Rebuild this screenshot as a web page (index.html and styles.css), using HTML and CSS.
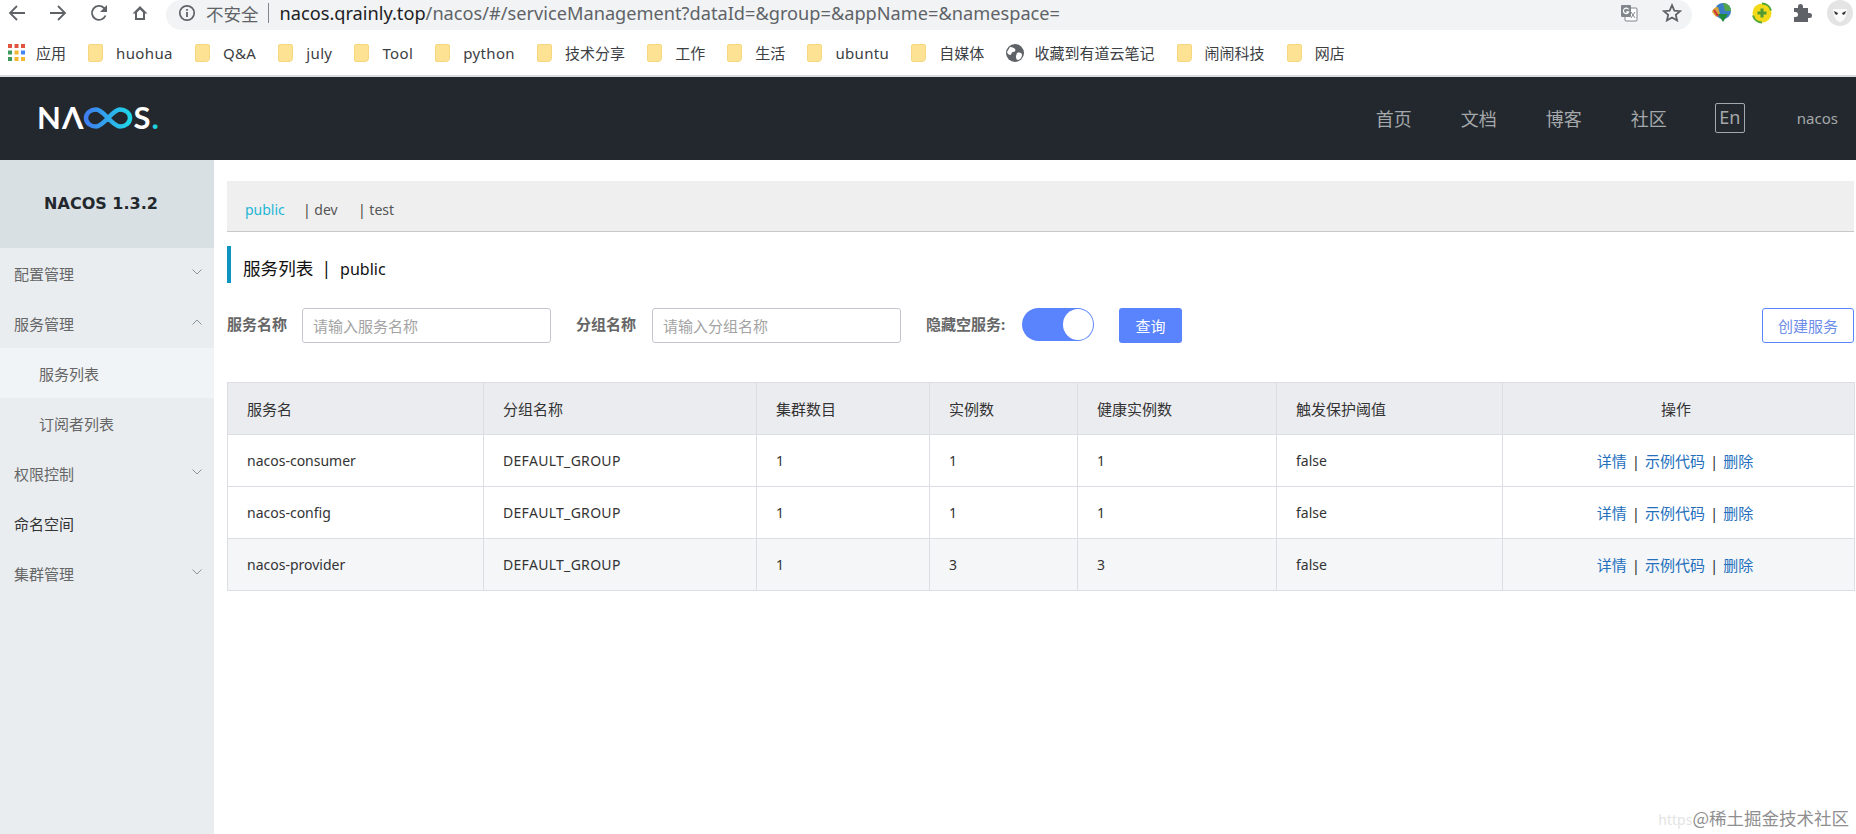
FILE: index.html
```html
<!DOCTYPE html>
<html lang="zh-CN">
<head>
<meta charset="utf-8">
<title>Nacos</title>
<link rel="stylesheet" href="styles.css">
</head>
<body>
<div class="toolbar">
  <div class="nav-icons">
    <svg class="ic" viewBox="0 0 18 18"><path d="M17 9H2M9 2 2 9l7 7" fill="none" stroke="#5f6368" stroke-width="1.8"/></svg>
    <svg class="ic" viewBox="0 0 18 18"><path d="M1 9h15M9 2l7 7-7 7" fill="none" stroke="#5f6368" stroke-width="1.8"/></svg>
    <svg class="ic" viewBox="0 0 18 18"><path d="M15.5 11.5A7 7 0 1 1 14 4l2 2" fill="none" stroke="#5f6368" stroke-width="1.8"/><path d="M17 1v7h-7z" fill="#5f6368"/></svg>
    <svg class="ic" viewBox="0 0 18 18"><path d="M9 2 1.500 9.500H4V16h10V9.500h2.500zM6 14V8.500l3-3 3 3V14z" fill="#5f6368" fill-rule="evenodd"/></svg>
  </div>
  <div class="omnibox">
    <svg class="info" viewBox="0 0 18 18"><circle cx="9" cy="9" r="7.200" fill="none" stroke="#5f6368" stroke-width="1.700"/><path d="M8.100 5h1.800v1.800H8.100zM8.100 8h1.800v5H8.100z" fill="#5f6368"/></svg>
    <span class="insecure">不安全</span>
    <span class="omni-sep"></span>
    <span class="url"><b>nacos.qrainly.top</b>/nacos/#/serviceManagement?dataId=&amp;group=&amp;appName=&amp;namespace=</span>
    <svg class="translate" viewBox="0 0 18 18"><rect x="5" y="4" width="12" height="13" rx="1" fill="#fff" stroke="#80868b"/><rect x="1" y="1" width="10" height="12" rx="1" fill="#80868b"/><path d="M8.500 5.500a2.700 2.700 0 1 0 .2 2.300H6.200" fill="none" stroke="#fff" stroke-width="1.200"/><path d="m11 8 4 6M15 8l-4 6" stroke="#80868b"/></svg>
    <svg class="star" viewBox="0 0 18 18"><path d="m9 2 2.100 4.800 5.200.5-3.900 3.400 1.200 5.100L9 13.100l-4.600 2.700 1.200-5.100-3.900-3.400 5.200-.5z" fill="none" stroke="#5f6368" stroke-width="1.600"/></svg>
  </div>
  <div class="ext-icons">
    <svg class="ext" viewBox="0 0 22 22"><circle cx="12" cy="9" r="8" fill="#3b7dc4"/><path d="M12 1a8 8 0 0 1 8 8h-6z" fill="#55a64b"/><path d="M1 10c1-4 4-5 6-5l2 7-4 3z" fill="#d9a43a"/><path d="M3 8l4 6z" stroke="#c33" stroke-width="2"/><path d="M7 12h10l-5 8z" fill="#1f8a3c"/></svg>
    <svg class="ext" viewBox="0 0 22 22"><circle cx="11" cy="11" r="9.500" fill="#f3d917"/><path d="M11 1.500a9.500 9.500 0 0 1 9 7" fill="none" stroke="#57a63a" stroke-width="2"/><path d="M11 20.500a9.500 9.500 0 0 1-9-7" fill="none" stroke="#57a63a" stroke-width="2"/><path d="M9.500 6.500h3v3h3v3h-3v3h-3v-3h-3v-3h3z" fill="#4f9a33"/></svg>
    <svg class="ext" viewBox="0 0 22 22"><path d="M3 6h4V4.500a2.500 2.500 0 0 1 5 0V6h5v5h1.500a2.500 2.500 0 0 1 0 5H17v4H3v-5h1.500a2.500 2.500 0 0 0 0-5H3z" fill="#5f6368"/></svg>
    <svg class="avatar" viewBox="0 0 26 26"><circle cx="13" cy="13" r="13" fill="#e4e4e4"/><path d="M6 9c4 0 14 0 14 0 0 8-4 13-7 13S6 17 6 9z" fill="#fafafa"/><path d="m7 11 4 2-1 2-2-1zM19 11l-4 2 1 2 2-1z" fill="#333"/></svg>
  </div>
</div>
<div class="bookmarks">
  <span class="bm"><svg class="apps" viewBox="0 0 17 17"><g fill="#e0533f"><rect width="4" height="4"/><rect x="6.500" width="4" height="4"/><rect x="13" width="4" height="4"/></g><g fill="#3c9a5f"><rect y="6.500" width="4" height="4"/></g><g fill="#f2b632"><rect x="6.500" y="6.500" width="4" height="4"/></g><g fill="#4285f4"><rect x="13" y="6.500" width="4" height="4"/></g><g fill="#3c9a5f"><rect y="13" width="4" height="4"/></g><g fill="#f2b632"><rect x="6.500" y="13" width="4" height="4"/><rect x="13" y="13" width="4" height="4"/></g></svg>应用</span>
  <span class="bm lat"><i class="folder"></i>huohua</span>
  <span class="bm lat"><i class="folder"></i>Q&amp;A</span>
  <span class="bm lat"><i class="folder"></i>july</span>
  <span class="bm lat"><i class="folder"></i>Tool</span>
  <span class="bm lat"><i class="folder"></i>python</span>
  <span class="bm"><i class="folder"></i>技术分享</span>
  <span class="bm"><i class="folder"></i>工作</span>
  <span class="bm"><i class="folder"></i>生活</span>
  <span class="bm lat"><i class="folder"></i>ubuntu</span>
  <span class="bm"><i class="folder"></i>自媒体</span>
  <span class="bm bm-globe"><svg class="globe" viewBox="0 0 18 18"><circle cx="9" cy="9" r="9" fill="#5f6368"/><path d="M4 3c3 0 4 1 5 2s0 3-2 3-1 3-3 3-3-3-3-3zM11 9c3-1 5 0 5 2s-2 5-4 5-2-3-2-4z" fill="#fff"/></svg>收藏到有道云笔记</span>
  <span class="bm"><i class="folder"></i>闹闹科技</span>
  <span class="bm"><i class="folder"></i>网店</span>
</div>
<header class="topbar">
  <div class="logo"><span>NΛ</span><svg class="inf" viewBox="0 0 50 24"><defs><linearGradient id="g" x1="0" x2="1"><stop offset="0" stop-color="#3f7df0"/><stop offset="1" stop-color="#1fd6e8"/></linearGradient></defs><path d="M13 3.500c-5.500 0-10 3.500-10 8.500s4.500 8.500 10 8.500c8 0 16-17 24-17 5.500 0 10 3.500 10 8.500s-4.500 8.500-10 8.500c-8 0-16-17-24-17z" fill="none" stroke="url(#g)" stroke-width="4.500"/></svg><span>S</span><span class="logo-dot">.</span></div>
  <nav class="topnav">
    <a>首页</a><a>文档</a><a>博客</a><a>社区</a>
    <span class="lang">En</span>
    <span class="user">nacos</span>
  </nav>
</header>
<div class="body-wrap">
  <aside class="sidebar">
    <div class="side-head">NACOS 1.3.2</div>
    <div class="side-item">配置管理<svg class="chev" viewBox="0 0 10 6"><path d="m.5.500 4.500 4.500L9.500.500" fill="none" stroke="#8a949c"/></svg></div>
    <div class="side-item">服务管理<svg class="chev" viewBox="0 0 10 6"><path d="M.5 5.500 5 1l4.500 4.500" fill="none" stroke="#8a949c"/></svg></div>
    <div class="side-item sub active">服务列表</div>
    <div class="side-item sub">订阅者列表</div>
    <div class="side-item">权限控制<svg class="chev" viewBox="0 0 10 6"><path d="m.5.500 4.500 4.500L9.500.500" fill="none" stroke="#8a949c"/></svg></div>
    <div class="side-item dark">命名空间</div>
    <div class="side-item">集群管理<svg class="chev" viewBox="0 0 10 6"><path d="m.5.500 4.500 4.500L9.500.500" fill="none" stroke="#8a949c"/></svg></div>
  </aside>
  <main class="content">
    <div class="tabs">
      <span class="tab tab-on">public</span>
      <span class="tab tab-dev">| <em>dev</em></span>
      <span class="tab">| <em>test</em></span>
    </div>
    <h1 class="title">服务列表<span class="title-sep">|</span><span class="title-ns">public</span></h1>
    <form class="filters">
      <label class="lbl">服务名称</label>
      <input class="field" placeholder="请输入服务名称">
      <label class="lbl">分组名称</label>
      <input class="field" placeholder="请输入分组名称">
      <label class="lbl">隐藏空服务:</label>
      <span class="switch"><i class="knob"></i></span>
      <button type="button" class="btn-primary">查询</button>
      <button type="button" class="btn-outline">创建服务</button>
    </form>
    <table class="grid">
      <thead>
        <tr>
          <th class="c1">服务名</th><th class="c2">分组名称</th><th class="c3">集群数目</th><th class="c4">实例数</th><th class="c5">健康实例数</th><th class="c6">触发保护阈值</th><th class="c7">操作</th>
        </tr>
      </thead>
      <tbody>
        <tr>
          <td>nacos-consumer</td><td class="grp">DEFAULT_GROUP</td><td>1</td><td>1</td><td>1</td><td>false</td>
          <td class="ops"><a>详情</a><span>|</span><a>示例代码</a><span>|</span><a>删除</a></td>
        </tr>
        <tr>
          <td>nacos-config</td><td class="grp">DEFAULT_GROUP</td><td>1</td><td>1</td><td>1</td><td>false</td>
          <td class="ops"><a>详情</a><span>|</span><a>示例代码</a><span>|</span><a>删除</a></td>
        </tr>
        <tr class="alt">
          <td>nacos-provider</td><td class="grp">DEFAULT_GROUP</td><td>1</td><td>3</td><td>3</td><td>false</td>
          <td class="ops"><a>详情</a><span>|</span><a>示例代码</a><span>|</span><a>删除</a></td>
        </tr>
      </tbody>
    </table>
  </main>
</div>
<div class="watermark"><span class="wm-faint">https</span>@稀土掘金技术社区</div>
</body>
</html>
```
FILE: styles.css
```css
* { box-sizing: border-box; }
html, body { margin: 0; height: 834px; overflow: hidden; background: #fff; }
body { font-family: "Noto Sans", "Noto Sans CJK SC", sans-serif; position: relative; }

.toolbar { height: 30px; display: flex; background: #fff; }
.nav-icons { display: flex; gap: 23px; padding: 4px 0 0 8px; width: 166px; }
.ic { width: 18px; height: 18px; }
.omnibox { width: 1526px; height: 30px; background: #f1f3f4; border-radius: 15px; display: flex; align-items: center; padding-left: 12px; }
.info { width: 18px; height: 18px; margin-top: -4px; }
.insecure { margin-left: 10px; font-size: 17.500px; color: #5f6368; margin-top: -4px; }
.omni-sep { width: 1px; height: 20px; background: #80868b; margin: -4px 11px 0 9px; }
.url { font-size: 18.200px; color: #5f6368; white-space: nowrap; flex: 1; margin-top: -5px; }
.url b { font-weight: 400; color: #202124; }
.translate { width: 18px; height: 18px; margin-right: 24px; margin-top: -4px; }
.star { width: 20px; height: 20px; margin-right: 10px; margin-top: -4px; }
.ext-icons { display: flex; align-items: center; flex: 1; padding-left: 19px; gap: 18px; margin-top: -4px; }
.ext { width: 22px; height: 22px; }
.avatar { width: 26px; height: 26px; margin-left: -4px; }

.bookmarks { height: 47px; border-bottom: 2px solid #dadce0; display: flex; align-items: center; padding: 0 0 0 8px; gap: 22.100px; font-size: 15px; color: #3c4043; white-space: nowrap; }
.bm { display: flex; align-items: center; gap: 13px; }
.lat { letter-spacing: .35px; }
.apps { width: 17px; height: 17px; margin-right: -2px; }
.folder { display: block; width: 15px; height: 18px; background: #fde293; border: 1px solid #f6d77f; border-radius: 2px; border-bottom-right-radius: 4px; }
.globe { width: 18px; height: 18px; margin-right: -3px; }

.topbar { height: 83px; background: #23282e; display: flex; align-items: center; justify-content: space-between; padding: 0 18px 2px 37px; }
.logo { display: flex; align-items: center; font: 700 31px/1 Lato, sans-serif; color: #fff; height: 30px; letter-spacing: 1px; }
.inf { width: 50px; height: 24px; margin: 0 0 0 -1px; }
.logo-dot { color: #22cfe0; }
.topnav { display: flex; align-items: center; color: #a5a8ab; }
.topnav a { font-size: 18px; margin-right: 49px; }
.lang { width: 30px; height: 30px; border: 1px solid #a5a8ab; border-radius: 2px; font-size: 18px; line-height: 26px; text-align: center; margin-left: -1px; }
.user { font-size: 15px; margin-left: 52px; }

.body-wrap { display: flex; height: 674px; }
.sidebar { width: 214px; flex: none; background: #e9edf0; }
.side-head { height: 88px; background: #d9e0e4; color: #23282e; font: 700 16px/88px "DejaVu Sans", sans-serif; text-align: center; padding-right: 12px; }
.side-item { height: 50px; padding-left: 14px; display: flex; align-items: center; justify-content: space-between; font-size: 15px; color: #666; padding-right: 12px; }
.sub { padding-left: 39px; }
.active { background: #f1f4f6; }
.dark { color: #333; }
.chev { width: 10px; height: 6px; margin-top: -3px; }

.content { flex: 1; padding: 21px 2px 0 13px; min-width: 0; }
.tabs { height: 51px; background: #efefef; border-bottom: 1px solid #c8c8c8; display: flex; align-items: flex-end; padding: 0 0 12px 18px; gap: 17px; font-size: 14px; color: #444; }
.tab { width: 41px; white-space: nowrap; }
.tab-dev { width: 38px; }
.tab em { font-style: normal; color: #555; }
.tab-on { color: #1fb6d6; }
.title { margin: 14px 0 0; height: 37px; border-left: 4px solid #0f93c0; padding-left: 12px; font-size: 17.600px; font-weight: 400; line-height: 44px; color: #111; white-space: nowrap; }
.title-sep { margin: 0 9px 0 8px; }
.title-ns { font-size: 16px; }
.filters { margin: 25px 0 0; height: 35px; display: flex; align-items: flex-start; }
.lbl { font-size: 15px; font-weight: 700; color: #666; line-height: 33px; white-space: nowrap; width: 59px; margin-right: 16px; }
.lbl:nth-of-type(2) { width: 60px; }
.lbl:nth-of-type(3) { width: 80px; }
.field { width: 249px; height: 35px; border: 1px solid #c4c6cf; border-radius: 3px; padding: 0 10px; margin-right: 25px; font: 15px "Noto Sans", "Noto Sans CJK SC", sans-serif; outline: 0; }
.field::placeholder { color: #a3a3a3; opacity: 1; }
.switch { width: 72px; height: 33px; background: #5a84fd; border-radius: 17px; margin-right: 25px; display: flex; justify-content: flex-end; padding: 1px; }
.knob { display: block; width: 30px; height: 31px; background: #fff; border-radius: 50%; }
.btn-primary { width: 63px; height: 35px; border: 0; border-radius: 3px; background: #5a84fd; color: #fff; font: 15px "Noto Sans", "Noto Sans CJK SC", sans-serif; padding: 0; }
.btn-outline { width: 92px; height: 35px; margin-left: auto; background: #fff; border: 1px solid #5a84fd; border-radius: 3px; color: #6d8ee8; font: 15px "Noto Sans", "Noto Sans CJK SC", sans-serif; padding: 0; }

.grid { width: 1627px; margin-top: 39px; border-collapse: collapse; table-layout: fixed; font-size: 14px; color: #333; }
.grid th, .grid td { border: 1px solid #dcdee3; padding: 0 0 0 19px; height: 52px; text-align: left; font-weight: 400; white-space: nowrap; line-height: 20px; }
.grid th { background: #ebecf0; font-size: 15px; }
.alt td { background: #f4f6f8; }
.grid .grp { letter-spacing: .3px; }
.c1 { width: 256px; } .c2 { width: 273px; } .c3 { width: 173px; } .c4 { width: 148px; } .c5 { width: 199px; } .c6 { width: 226px; } .c7 { width: 352px; }
.grid .c7 { text-align: center; padding: 0 5px 0 0; }
.grid .ops { text-align: center; padding: 0 7px 0 0; color: #333; font-size: 15px; }
.ops a { color: #2470bd; }
.ops span { margin: 0 5px; }

.watermark { position: absolute; right: 7px; top: 805px; font-family: "Noto Sans CJK SC", sans-serif; font-size: 17.500px; color: #8f8f8f; white-space: nowrap; }
.wm-faint { color: #e4e4e4; font-family: "Noto Sans", sans-serif; font-size: 14px; }
```
